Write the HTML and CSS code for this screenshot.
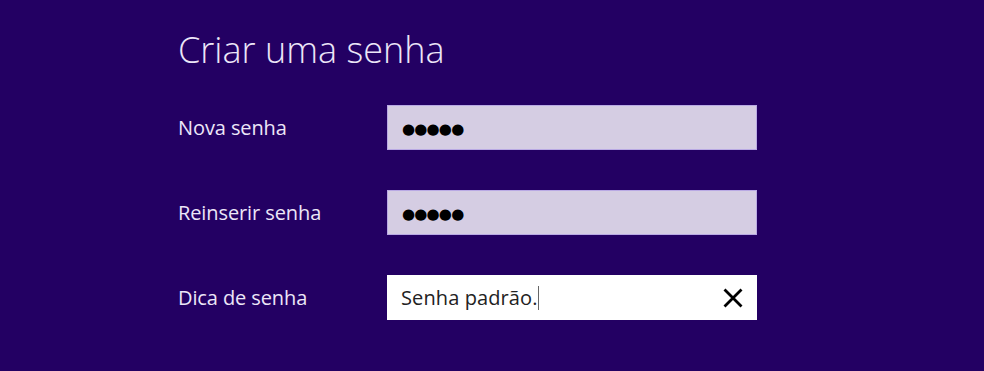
FILE: index.html
```html
<!DOCTYPE html>
<html lang="pt">
<head>
  <meta charset="UTF-8">
  <title>Criar uma senha</title>
  <link rel="stylesheet" href="styles.css">
</head>
<body>
  <div class="page">
    <h1 class="title">Criar uma senha</h1>

    <div class="row">
      <label class="label">Nova senha</label>
      <div class="field pwd"><span class="dots">●●●●●</span></div>
    </div>

    <div class="row">
      <label class="label">Reinserir senha</label>
      <div class="field pwd"><span class="dots">●●●●●</span></div>
    </div>

    <div class="row">
      <label class="label">Dica de senha</label>
      <div class="field hint">
        <span class="hint-text">Senha padrão.</span><span class="caret"></span>
        <svg class="clear" width="22" height="22" viewBox="0 0 22 22">
          <path d="M2.5 2.5 L19.5 19.5 M19.5 2.5 L2.5 19.5" stroke="#000" stroke-width="2.8" fill="none"/>
        </svg>
      </div>
    </div>
  </div>
</body>
</html>
```

FILE: styles.css
```css
html, body { margin: 0; height: 100%; }
body { background: #230063; font-family: "Open Sans", "Noto Sans", sans-serif; color: #ece6f8; }
.page { padding: 28px 0 0 178px; }
.title { margin: 0 0 33px; font-size: 36px; font-weight: 300; line-height: 44px; letter-spacing: 0; }
.row { display: flex; align-items: center; margin-bottom: 40px; }
.label { width: 209px; font-size: 20px; letter-spacing: -0.1px; }
.field { box-sizing: border-box; width: 370px; height: 45px; display: flex; align-items: center; padding: 0 14px; }
.pwd { background: #d5cde3; border: 1px solid #b9a9e4; }
.dots { font-family: "DejaVu Sans", sans-serif; font-size: 15px; color: #000; letter-spacing: -0.8px; padding-top: 2px; }
.hint { background: #fff; }
.hint-text { font-size: 20px; color: #222; letter-spacing: 0.1px; }
.caret { width: 1px; height: 24px; background: #666; }
.clear { margin-left: auto; margin-right: -1px; }
```
